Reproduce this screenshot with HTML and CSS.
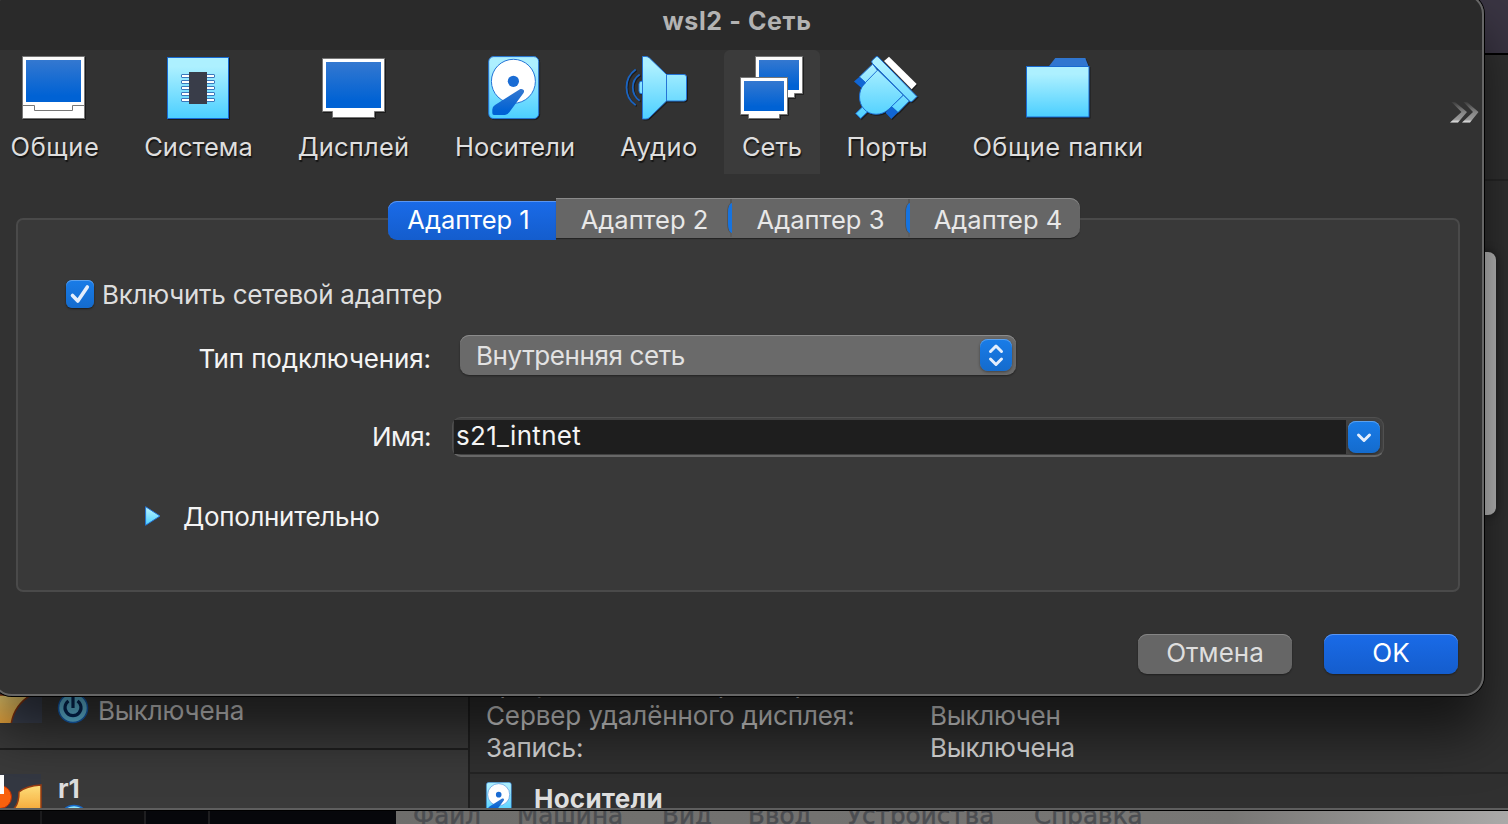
FILE: index.html
```html
<!DOCTYPE html>
<html lang="ru">
<head>
<meta charset="utf-8">
<title>wsl2 - Сеть</title>
<link rel="stylesheet" href="styles.css">
</head>
<body>
<svg class="defs" width="0" height="0" aria-hidden="true">
  <defs>
    <linearGradient id="screen" x1="0" y1="0" x2="0" y2="1"><stop offset="0" stop-color="#3478d0"/><stop offset=".85" stop-color="#0062d4"/></linearGradient>
    <linearGradient id="sky" x1="0" y1="0" x2="0" y2="1"><stop offset=".15" stop-color="#adf0ff"/><stop offset="1" stop-color="#4bcfff"/></linearGradient>
    <linearGradient id="skyAbs" gradientUnits="userSpaceOnUse" x1="0" y1="0" x2="0" y2="64"><stop offset=".15" stop-color="#adf0ff"/><stop offset="1" stop-color="#4bcfff"/></linearGradient>
    <linearGradient id="chev" x1="0" y1="0" x2="0" y2="1"><stop offset="0" stop-color="#3c3c3c"/><stop offset=".5" stop-color="#858585"/><stop offset=".85" stop-color="#9a9a9a"/><stop offset="1" stop-color="#eee"/></linearGradient>
    <linearGradient id="gold" x1="0" y1="0" x2="0" y2="1"><stop offset="0" stop-color="#ffe07c"/><stop offset="1" stop-color="#f5a93a"/></linearGradient>
    <symbol id="disk" viewBox="0 0 64 64">
      <rect x="6.7" y=".6" width="50" height="62" rx="5" fill="url(#sky)" stroke="#2474d6"/>
      <circle cx="31.4" cy="25.3" r="22" fill="#fff" stroke="#2474d6"/>
      <circle cx="31.4" cy="25.3" r="5.6" fill="#1a6cd4"/>
      <path d="M37.5 33.5C40 32 43.500 34 41.500 37L27.500 56Q25.500 59 23 59H12Q10.300 59 10.300 57V53.500Q10.300 50.500 13 49Z" fill="url(#screen)"/>
    </symbol>
  </defs>
</svg>
<div class="desktop">

  <div class="window guest">
    <nav class="menubar">
      <span class="m1">Файл</span><span class="m2">Машина</span><span class="m3">Вид</span><span class="m4">Ввод</span><span class="m5">Устройства</span><span class="m6">Справка</span>
    </nav>
  </div>

  <div class="window manager">
    <div class="manager-bar"></div>
    <div class="manager-body">
      <aside class="machines">
        <div class="machine off">
          <svg class="thumb" width="42" height="43" viewBox="0 0 42 43"><rect width="42" height="43" fill="#3d4352"/><path d="M-2 15H31C21 21 13 30 11 45H-2Z" fill="url(#gold)" stroke="#8a3512" stroke-width="1.500"/></svg>
          <svg class="power" width="32" height="32" viewBox="0 0 32 32"><circle cx="16" cy="16" r="14.500" fill="#6fd5fb" stroke="#1769c8" stroke-width="1.500"/><path d="M11.500 9A8 8 0 1 0 20.500 9M16 4.500V16" fill="none" stroke="#062c62" stroke-width="3.200"/></svg>
          <span class="state">Выключена</span>
        </div>
        <div class="machine">
          <svg class="thumb" width="42" height="36" viewBox="0 0 42 36"><rect width="41" height="36" fill="#343842"/><path d="M12 36Q19 32 19 18Q26 12 41 11V36Z" fill="url(#gold)" stroke="#9a3c12" stroke-width="1.500"/><circle cx="0" cy="23" r="11.500" fill="#f9610d" stroke="#b82c06"/><path d="M0 1H4V20H0Z" fill="#fff"/></svg>
          <div class="machine-text"><b>r1</b>
          <svg width="32" height="32" viewBox="0 0 32 32"><circle cx="16" cy="16" r="14.500" fill="#8fe6ff" stroke="#1769c8" stroke-width="1.500"/></svg></div>
        </div>
      </aside>
      <section class="details">
        <div class="prev-section"></div>
        <div class="props">
          <span>Графический контроллер:</span><span></span>
          <span class="f-server">Сервер удалённого дисплея:</span><span class="f-v">Выключен</span>
          <span class="f-server">Запись:</span><span class="f-v">Выключена</span>
        </div>
        <div class="storage"><svg width="32" height="32"><use href="#disk"/></svg><b>Носители</b></div>
      </section>
      <div class="preview"></div>
    </div>
  </div>

  <div class="window dialog">
    <header class="titlebar"><span>wsl2 - Сеть</span></header>
    <div class="toolbar">
      <div class="tool"><svg viewBox="0 0 64 64"><path d="M.5 .5H62.500V62.500H.5Z" fill="#fff" stroke="#777"/><rect x="4" y="4" width="55" height="42" fill="url(#screen)"/><path d="M0 49.500H12.500V54.500H50.500V49.500H63" fill="none" stroke="#777"/></svg><span class="t1">Общие</span></div>
      <div class="tool"><svg viewBox="0 0 64 64"><rect x="1.500" y="1.500" width="61" height="61" fill="url(#sky)" stroke="#1669d2"/><g fill="#fff" stroke="#3a78bd"><rect x="15.500" y="18.500" width="33" height="3" rx=".5"/><rect x="15.500" y="24.500" width="33" height="3" rx=".5"/><rect x="15.500" y="30.500" width="33" height="3" rx=".5"/><rect x="15.500" y="36.500" width="33" height="3" rx=".5"/><rect x="15.500" y="42.500" width="33" height="3" rx=".5"/></g><rect x="23" y="16" width="18" height="32" fill="#393d49"/></svg><span class="t2">Система</span></div>
      <div class="tool"><svg viewBox="0 0 64 64"><path d="M.5 2.500H62.500V55.500H52.500V61.500H10.500V55.500H.5Z" fill="#fff" stroke="#777"/><rect x="4" y="6" width="55" height="46" fill="url(#screen)"/></svg><span class="t3">Дисплей</span></div>
      <div class="tool"><svg viewBox="0 0 64 64"><use href="#disk"/></svg><span class="t4">Носители</span></div>
      <div class="tool"><svg viewBox="0 0 64 64"><g stroke="#2474d6" fill="url(#skyAbs)"><path d="M17.500 25Q14 25 14 28V35Q14 38 17.500 38Z"/><path d="M17.500 .5H21Q23 .5 24.500 2L41.500 18.500V45L24.500 61.500Q23 63 21 63H17.500Z"/><path d="M41.500 18.500H59Q61.500 18.500 61.500 21V42.500Q61.500 45 59 45H41.500Z"/></g><path d="M10.700 13.500C-1.500 22-1.500 41 10.700 49.300M14.700 18.500C5.500 24.500 5.500 38.500 14.700 44.700" fill="none" stroke="#1a64c2" stroke-width="1.800"/></svg><span class="t5">Аудио</span></div>
      <div class="tool active"><svg viewBox="0 0 64 64"><g fill="#fff" stroke="#777"><path d="M15.500 .5H62.500V37.500H54.500V41.500H20V37.500H15.500Z"/></g><rect x="19" y="4" width="40" height="30" fill="url(#screen)"/><path d="M.5 21.500H47.500V58.500H39.500V62.500H8.500V58.500H.5Z" fill="#fff" stroke="#777"/><rect x="4" y="25" width="40" height="30" fill="url(#screen)"/></svg><span class="t6">Сеть</span></div>
      <div class="tool"><svg viewBox="0 0 64 64"><path d="M30 5L35 .7L62.700 28L57.700 33.300Z" fill="#fff"/><g stroke="#1d6fd6" fill="url(#skyAbs)"><path d="M18.700 8L5.300 21L12 27L24 15Z"/><path d="M49.300 39L55.300 45L44 56.500L37.500 50.500Z"/><path d="M8.700 50.700L1.700 57.500L6.700 62.500L13.700 55.700Z"/><path d="M23.700 14L49.300 39L35 53C28 60 16 60 10 53C4 47 4 35 10 28Z"/><path d="M17.700 5L22 .8Q23 0 24 .8L63 40.500L58 45.500Q57 46 56 45.500L18 7Z"/></g><path d="M5.500 20.700L12 27L7 31.700L0 25.500ZM37.700 50.500L44 56.500L37.300 63L31.500 56.700Z" fill="#1166d4"/></svg><span class="t7">Порты</span></div>
      <div class="tool"><svg viewBox="0 0 64 64"><path d="M22.700 10.500L29.300 2H59.300L62.700 10.500Z" fill="#3076d0"/><rect x=".5" y="10.500" width="62.500" height="50.500" fill="url(#sky)" stroke="#1669d2"/></svg><span class="t8">Общие папки</span></div>
      <svg class="more" viewBox="0 0 29 21"><g fill="url(#chev)"><path d="M1.500 0H5L17 10L8 20.500H0L11.500 10Z"/><path d="M13.500 0H17L28.500 10L20 20.500H12L23 10Z"/></g></svg>
    </div>

    <main class="panel">
      <div class="tabs">
        <div class="tab on"><span>Адаптер 1</span></div>
        <div class="tab-group">
          <div class="tab"><span>Адаптер 2</span></div>
          <div class="tab"><span>Адаптер 3</span></div>
          <div class="tab"><span>Адаптер 4</span></div>
        </div>
      </div>
      <label class="enable">
        <span class="check"><svg viewBox="0 0 28 28"><path d="M6.500 15.500L11.800 21L21.300 7" fill="none" stroke="#e4eefc" stroke-width="3.600" stroke-linecap="round" stroke-linejoin="round"/></svg></span>
        <span class="f-enable">Включить сетевой адаптер</span>
      </label>
      <div class="row type"><span class="name"><span class="f-type">Тип подключения:</span></span>
        <div class="select"><span class="f-net">Внутренняя сеть</span><i class="knob"><svg viewBox="0 0 32 32"><path d="M10.500 12.500L16 7L21.500 12.500M10.500 20L16 25.500L21.500 20" fill="none" stroke="#e4eefc" stroke-width="3" stroke-linecap="round" stroke-linejoin="round"/></svg></i></div>
      </div>
      <div class="row net"><span class="name"><span class="f-name">Имя:</span></span>
        <div class="combo"><span class="field"><span class="f-int">s21_intnet</span></span><i class="knob"><svg viewBox="0 0 32 32"><path d="M10.500 14L16 19.500L21.500 14" fill="none" stroke="#e4eefc" stroke-width="3" stroke-linecap="round" stroke-linejoin="round"/></svg></i></div>
      </div>
      <div class="advanced"><svg width="16" height="20" viewBox="0 0 16 20"><path d="M.6 .7L15 10L.6 19.300Z" fill="url(#sky)" stroke="#2474d6"/></svg><span class="f-adv">Дополнительно</span></div>
    </main>

    <footer class="actions">
      <div class="btn cancel"><span>Отмена</span></div>
      <div class="btn ok"><span>OK</span></div>
    </footer>
  </div>
</div>
</body>
</html>
```
FILE: styles.css
```css
* { box-sizing: border-box; }
body { margin: 0; background: #000; font-family: Inter, "Liberation Sans", sans-serif; font-size: 26px; line-height: 32px; color: #dedede; }
svg { display: block; flex: none; }
.defs { position: absolute; }
.desktop { position: relative; width: 1508px; height: 824px; overflow: hidden; white-space: nowrap; background: linear-gradient(90deg, #0b0b0d 0 40px, #1b1b1d 40px 42px, #0b0b0d 42px 144px, #1e1e20 144px 146px, #06070b 146px 208px, #1e1e20 208px 210px, #06070b 210px); }
.window { position: absolute; }

/* guest machine window peeking out at the bottom */
.guest { left: 396px; top: 790px; width: 1112px; height: 34px; background: linear-gradient(90deg, #6e6d6b, #787775 75%, #aaa9a8); }
.menubar { display: flex; padding: 10px 0 0 17px; font-family: "DejaVu Sans", sans-serif; font-size: 24.500px; letter-spacing: .1px; color: #4b4d51; -webkit-text-stroke: .5px #4b4d51; }
.menubar span { flex: none; }
.m1 { width: 104px; } .m2 { width: 145px; } .m3 { width: 86px; } .m4 { width: 99px; } .m5 { width: 187px; }

/* manager window */
.manager { left: -30px; top: -40px; width: 1600px; height: 850px; border-bottom: 2px solid #5e5e5e; box-shadow: 0 1px 0 #000; background: #303030; overflow: hidden; }
.manager-bar { height: 95px; background: #3a3543; border-bottom: 2px solid #000; }
.manager-body { position: relative; display: flex; height: 753px; padding-left: 30px; }
.machines { width: 470px; border-right: 2px solid #1f1f1f; background: #3a3a3a; }
.machine { display: flex; height: 60px; }
.machine.off { height: 695px; padding-top: 625px; border-bottom: 2px solid #1f1f1f; }
.power { margin: 12px 0 0 15px; }
.state { margin: 15px 0 0 9px; letter-spacing: -.15px; }
.machine + .machine { padding-top: 24px; }
.machine-text { padding: 0 0 0 16px; }
.machine-text b { display: block; height: 31px; margin-top: -1px; }
.details { flex: 1; background: #303030; }
.prev-section { height: 126px; border-bottom: 2px solid #262626; }
.props { display: grid; grid-template-columns: 444px 1fr; height: 593px; padding-left: 16px; align-content: end; padding-bottom: 8px; border-bottom: 2px solid #242424; }
.f-server { letter-spacing: -.12px; }
.f-v { letter-spacing: -.3px; }
.storage { display: flex; gap: 19px; padding: 8px 0 0 13px; }
.storage b { padding-top: 1px; letter-spacing: .25px; }
.preview { position: absolute; left: 1500px; top: 197px; width: 26px; height: 263px; border-radius: 0 8px 8px 0; background: #bdbdbd; box-shadow: 0 0 10px #0008; }

/* settings dialog */
.dialog { left: -8px; top: -6px; width: 1492px; height: 702px; display: flex; flex-direction: column; border-radius: 20px; background: #323232; box-shadow: 0 0 0 1px #000, 0 36px 54px rgba(0,0,0,.58); }
.dialog::after { content: ""; position: absolute; inset: 0; border: 2px solid #666; border-radius: 20px; pointer-events: none; }
.titlebar { height: 56px; padding: 11px 2px 0 0; border-radius: 20px 20px 0 0; background: #2a2a2a; text-align: center; font-weight: 700; font-size: 25px; letter-spacing: .6px; color: #b3b3b3; }
.toolbar { display: grid; grid-template-columns: 124px 148px 148px 156px 114px 100px 112px 216px 1fr; column-gap: 8px; height: 124px; }
.tool { display: flex; flex-direction: column; align-items: center; padding-top: 6px; font-size: 25.500px; text-shadow: 1px 2px 1px #0009; }
.tool svg { width: 64px; height: 64px; filter: drop-shadow(1px 1px 0 #0007); }
.tool span { margin-top: 11px; }
.tool .t1 { padding-left: 2px; letter-spacing: .6px; }
.tool .t2 { padding-left: 1px; }
.tool .t3 { letter-spacing: .2px; margin-right: 1px; }
.tool .t4 { padding-left: 2px; }
.tool .t5 { padding-left: 4px; letter-spacing: .4px; }
.tool .t7 { padding-left: 2px; }
.tool .t8 { letter-spacing: .45px; }
.tool.active { width: 96px; justify-self: center; background: #3b3b3b; border-radius: 6px 6px 0 0; }
.more { width: 29px; height: 21px; margin: 52px 5px 0 0; justify-self: end; }

.panel { margin: 44px 24px 0; height: 374px; border: 2px solid #4a4a4a; border-radius: 7px; background: #393939; }
.tabs { display: flex; margin: -22px 0 0 370px; width: 692px; height: 42px; color: #e8e8e8; font-size: 25.500px; }
.tab { display: flex; justify-content: center; align-items: center; }
.tab.on { width: 168px; height: 39px; margin-top: 3px; padding: 0 7px 2px 0; border-radius: 9px 0 0 9px; background: linear-gradient(#1a6be8, #145dcd); box-shadow: inset 0 1px #5b96f2; color: #fff; }
.tab-group { display: flex; width: 524px; height: 40px; border-radius: 0 10px 10px 0; background: #666; box-shadow: inset 0 1px #8a8a8a, 0 1px 1px #0006; }
.tab-group .tab { position: relative; width: 178px; padding: 3px 0 0 3px; }
.tab-group .tab:first-child { width: 174px; }
.tab-group .tab:last-child { width: 172px; padding-left: 8px; }
.tab-group .tab + .tab::before { content: ""; position: absolute; left: -2px; top: 5px; width: 4px; height: 30px; border-radius: 4px 0 0 4px / 9px 0 0 9px; background: #1673df; box-shadow: -1px 0 #555; }
.tab-group .tab + .tab::after { content: ""; position: absolute; left: 0; top: 1px; width: 2px; height: 38px; background: linear-gradient(#585858 4px, transparent 4px 34px, #5e5e5e 34px); }
.enable { display: flex; gap: 8px; margin: 40px 0 0 48px; height: 28px; align-items: center; }
.check { width: 28px; height: 28px; border-radius: 6px; background: linear-gradient(#197ce8, #146bcd); box-shadow: inset 0 1px #5ba1ee, 0 1px 2px #0008; }
.f-enable { padding-top: 2px; letter-spacing: -.26px; }
.row { display: flex; align-items: center; color: #f4f4f4; }
.name { width: 413px; display: flex; justify-content: flex-end; }
.f-type { letter-spacing: -.12px; }
.f-name { letter-spacing: -.6px; }
.type { margin-top: 27px; height: 40px; }
.type .name { padding-top: 8px; }
.select { display: flex; justify-content: space-between; align-items: center; width: 556px; height: 40px; margin-left: 29px; padding: 0 4px 0 16px; border-radius: 9px; background: #6a6a6a; box-shadow: inset 0 1px #8b8b8b, 0 1px 2px #0006; color: #e2e2e2; }
.knob { width: 32px; height: 32px; border-radius: 8px; background: linear-gradient(#197ce8, #146bcd); box-shadow: inset 0 1px #5ba1ee, 0 1px 3px #0006; }
.select .f-net { padding-top: 2px; letter-spacing: -.4px; }
.net { margin-top: 42px; height: 40px; }
.combo { display: flex; align-items: center; gap: 2px; width: 932px; height: 40px; margin-left: 21px; padding-left: 1px; border: 1px solid #505050; border-bottom: 2px solid #686868; border-radius: 9px; background: #424242; }
.field { width: 892px; height: 34px; padding-left: 2px; background: #1e1e1e; line-height: 32px; }
.f-int { letter-spacing: .3px; }
.advanced { display: flex; align-items: center; gap: 22px; margin: 44px 0 0 127px; height: 32px; color: #f4f4f4; }
.advanced svg { margin-top: -2px; }
.f-adv { letter-spacing: -.33px; }
.actions { display: flex; justify-content: flex-end; gap: 32px; padding: 42px 26px 0 0; }
.btn { display: flex; justify-content: center; align-items: center; height: 40px; padding-bottom: 2px; border-radius: 9px; box-shadow: inset 0 1px #858585, 0 1px 2px #0006; background: #666; }
.cancel { width: 154px; }
.ok { width: 134px; background: linear-gradient(#1a6be8, #145dcd); box-shadow: inset 0 1px #5b96f2, 0 1px 2px #0006; color: #fff; }
```
